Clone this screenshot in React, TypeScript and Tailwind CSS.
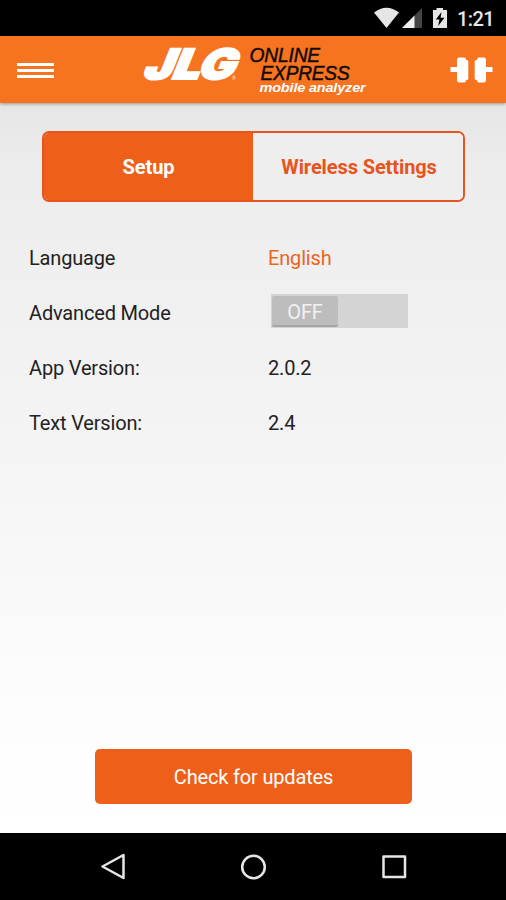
import type { ReactNode } from "react";

function StatusBar() {
  return (
    <div className="flex h-9 shrink-0 items-center justify-end bg-black pr-[12px]">
      <svg width="80" height="36" viewBox="0 0 80 36" className="mr-[3px]">
        <path d="M0 12.500 Q12.500 3 25 12.500 L12.500 28 Z" fill="#e6e6e6" />
        <path d="M48 8 V28 H28 Z" fill="#454545" />
        <path d="M40.500 15.500 V28 H28 Z" fill="#f0f0f0" />
        <path d="M59 10 H62.500 V8 H69 V10 H73 V28 H59 Z" fill="#e6e6e6" />
        <path d="M67.500 12 L61.800 19.500 H65.400 L64.200 26 L70.500 17.800 H66.600 Z" fill="#000" />
      </svg>
      <span className="mt-[2px] text-[20px] leading-[36px] font-medium tracking-[-0.6px] text-[#e6e6e6]">1:21</span>
    </div>
  );
}

function Logo() {
  return (
    <svg width="250" height="67" viewBox="122 36 250 67" className="overflow-visible">
      <g transform="translate(141.500 78.500) skewX(-22)">
        <text x="0" y="0" fontFamily="Inter, sans-serif" fontWeight="900" fontSize="41.500" fill="#fff" stroke="#fff" strokeWidth="2.200" strokeLinejoin="miter" textLength="91" lengthAdjust="spacingAndGlyphs">
          JLG
        </text>
      </g>
      <text x="232" y="80" fontFamily="Liberation Sans, sans-serif" fontSize="5" fill="#fff">®</text>
      <g fontFamily="Liberation Sans, sans-serif" fontStyle="italic">
        <text x="249.500" y="62" fontSize="19.500" fill="#120a06" stroke="#120a06" strokeWidth="0.450" textLength="70.500" lengthAdjust="spacingAndGlyphs">ONLINE</text>
        <text x="260.500" y="79.500" fontSize="19.500" fill="#120a06" stroke="#120a06" strokeWidth="0.450" textLength="89" lengthAdjust="spacingAndGlyphs">EXPRESS</text>
        <text x="259.500" y="92.300" fontSize="13.500" fontWeight="700" fill="#fff" textLength="106" lengthAdjust="spacingAndGlyphs">mobile analyzer</text>
      </g>
    </svg>
  );
}

function Header() {
  return (
    <header className="z-10 flex h-[67px] shrink-0 items-center bg-[#f67320] pl-[17px] shadow-[0_1px_3px_rgba(0,0,0,0.35)]">
      <button className="mt-[2px] flex w-[37px] flex-col gap-[3px]" aria-label="Menu">
        <span className="h-[3px] w-full bg-white" />
        <span className="h-[3px] w-full bg-white" />
        <span className="h-[3px] w-full bg-white" />
      </button>
      <div className="ml-[68px]">
        <Logo />
      </div>
      <svg width="44" height="30" viewBox="0 0 44 30" className="ml-[78px]" fill="#fff">
        <rect x="0.500" y="12" width="8" height="5" />
        <rect x="7" y="2.500" width="9" height="25" rx="2" />
        <rect x="14" y="5" width="4.300" height="20" rx="1.500" />
        <rect x="24.700" y="5" width="4.300" height="20" rx="1.500" />
        <rect x="27" y="2.500" width="9" height="25" rx="2" />
        <rect x="34" y="12" width="8.500" height="5" />
      </svg>
    </header>
  );
}

function Row({ label, children }: { label: string; children: ReactNode }) {
  return (
    <div className="flex h-[55px] items-center">
      <span className="w-[239px]">{label}</span>
      {children}
    </div>
  );
}

export default function App() {
  return (
    <div className="flex h-[900px] w-[506px] flex-col overflow-hidden bg-white font-['Roboto',sans-serif] text-[20px] tracking-[-0.17px] text-[#222]">
      <StatusBar />
      <Header />
      <main className="flex flex-1 flex-col bg-[linear-gradient(to_bottom,#e6e6e6_0%,#ececec_8%,#efefef_21%,#f4f4f4_46%,#fdfdfd_84%,#fff_100%)]">
        <div className="mt-[28px] ml-[42px] flex h-[71px] w-[423px] overflow-hidden rounded-[7px] border-[2.500px] border-[#e8541d] font-bold tracking-[-0.1px]">
          <button className="w-[209px] bg-[#ee5f19] text-white">Setup</button>
          <button className="flex-1 bg-[#eee] pl-[2px] text-[#e8541d]">Wireless Settings</button>
        </div>
        <div className="mt-[28px] pl-[29px]">
          <Row label="Language">
            <span className="text-[#ec641f]">English</span>
          </Row>
          <Row label="Advanced Mode">
            <div className="-mt-[3px] ml-[3px] flex h-[34px] w-[137px] items-end bg-[#d4d4d4] pb-px pl-px">
              <span className="flex h-[31px] w-[66px] items-center justify-center rounded-[2px] border-b-2 border-[#a5a5a5] bg-[#bdbdbd] pt-[2px] text-[#f2f2f2]">OFF</span>
            </div>
          </Row>
          <Row label="App Version:">
            <span>2.0.2</span>
          </Row>
          <Row label="Text Version:">
            <span>2.4</span>
          </Row>
        </div>
        <button className="mt-auto mb-[29px] ml-[95px] h-[55px] w-[317px] rounded-[5px] bg-[#ee5f19] text-white">
          Check for updates
        </button>
      </main>
      <nav className="h-[67px] shrink-0 bg-black">
        <svg width="506" height="67" viewBox="0 833 506 67" fill="none" stroke="#e6e6e6" strokeWidth="2.500" strokeLinejoin="round">
          <path d="M123.500 855 V878 L102.500 866.500 Z" />
          <circle cx="253.500" cy="867" r="11.300" />
          <rect x="383.500" y="856.500" width="21.500" height="20.500" />
        </svg>
      </nav>
    </div>
  );
}
